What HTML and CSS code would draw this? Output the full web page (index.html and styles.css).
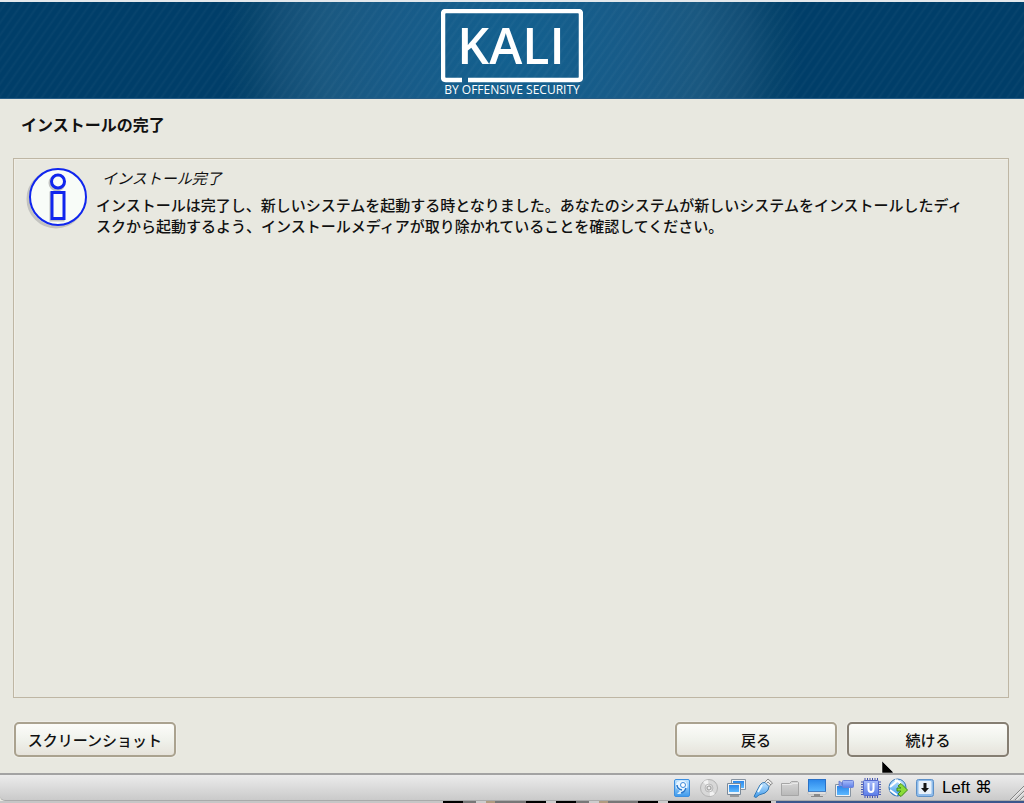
FILE: index.html
```html
<!doctype html>
<html lang="ja">
<head>
	<meta charset="utf-8">
	<meta name="viewport" content="width=device-width,initial-scale=1">
	<title>インストールの完了</title>
	<link rel="stylesheet" href="styles.css">
</head>

<body>
	<header class="banner">
		<div class="logo">
			<svg class="logo-frame" width="142" height="74" viewBox="0 0 142 74">
				<path d="M21 71H5Q2 71 2 68V5Q2 2 5 2H137Q140 2 140 5V68Q140 71 137 71H27" fill="none" stroke="#fff" stroke-width="4.500"/>
				<text class="logo-name" x="70" y="55" text-anchor="middle">KALI</text>
			</svg>
			<div class="logo-sub">BY OFFENSIVE SECURITY</div>
		</div>
	</header>

	<main class="installer">
		<h1 class="title">インストールの完了</h1>
		<section class="panel">
			<svg class="info" width="62" height="62" viewBox="0 0 62 62">
				<circle cx="30" cy="32" r="28" fill="none" stroke="#aaa" stroke-width="3" opacity=".6"/>
				<circle cx="32" cy="30" r="28" fill="#f8fcf8" stroke="#1026ee" stroke-width="2"/>
				<g fill="none" stroke="#aaa" stroke-width="3" opacity=".7">
					<circle cx="31" cy="16" r="7"/>
					<path d="M25 26h12v27H25z"/>
				</g>
				<g fill="#f8fcf8" stroke="#1026ee" stroke-width="3">
					<circle cx="32" cy="14.500" r="6.500"/>
					<path d="M26 25.500h12v26H26z"/>
				</g>
			</svg>
			<div class="message">
				<h2 class="message-title">インストール完了</h2>
				<p class="message-text">インストールは完了し、新しいシステムを起動する時となりました。あなたのシステムが新しいシステムをインストールしたディ<br>スクから起動するよう、インストールメディアが取り除かれていることを確認してください。</p>
			</div>
		</section>
		<div class="buttons">
			<button type="button" class="btn">スクリーンショット</button>
			<button type="button" class="btn back">戻る</button>
			<button type="button" class="btn next">続ける</button>
		</div>
		<svg class="cursor" width="12" height="12" viewBox="0 0 12 12"><path d="M1 0L12 11V12H1z" stroke="#fff" stroke-width=".5"/></svg>
	</main>

	<footer class="status">
		<svg width="0" height="0" class="defs">
			<defs>
				<linearGradient id="blue" x2="0" y2="1"><stop offset="0" stop-color="#2b87ea"/><stop offset="1" stop-color="#5cb8ff"/></linearGradient>
				<linearGradient id="sky" x2="0" y2="1"><stop offset="0" stop-color="#c6e6ff"/><stop offset="1" stop-color="#3c99ec"/></linearGradient>
				<linearGradient id="violet" x2="0" y2="1"><stop offset="0" stop-color="#a9bdfa"/><stop offset="1" stop-color="#5b7de8"/></linearGradient>
				<linearGradient id="grey" x2="0" y2="1"><stop offset="0" stop-color="#d8d8d8"/><stop offset="1" stop-color="#b8b8b8"/></linearGradient>
			</defs>
		</svg>
		<!-- hard disk -->
		<svg class="icon" viewBox="0 0 20 20">
			<rect x="2.500" y="1.500" width="15" height="17" rx="1.500" fill="url(#sky)" stroke="#3c8fe0"/>
			<path d="M5 4q5-3 9 0 3 4 0 8-2 3-7 4h-2l3-3-4-3q-1-3 1-6z" fill="#e6f4ff"/>
			<circle cx="11" cy="7" r="2.500" fill="#fff" stroke="#3a89dc"/>
			<path d="M5 7q0 4 5 5M14 10q-1 4-5 5" fill="none" stroke="#2878cc" stroke-width="1.500"/>
		</svg>
		<!-- optical disc -->
		<svg class="icon" viewBox="0 0 20 20">
			<circle cx="10" cy="10" r="8.500" fill="#d8d8d8" stroke="#b4b4b4"/>
			<path d="M10 10L4 4a8 8 0 0 1 5-2zM10 10l6 6a8 8 0 0 1-5 2z" fill="#f2f2f2"/>
			<circle cx="10" cy="10" r="4" fill="none" stroke="#bbb"/>
			<circle cx="10" cy="10" r="2" fill="#ececec" stroke="#999"/>
		</svg>
		<!-- network -->
		<svg class="icon" viewBox="0 0 20 20">
			<path d="M5.500 1.500h14v10h-14z" fill="#eef2f6" stroke="#8794a2"/>
			<path d="M7 3h11v7H7z" fill="url(#blue)"/>
			<path d="M4 17h9v2H4z" fill="#999"/>
			<path d="M1.500 5.500h13v11h-13z" fill="#eef2f6" stroke="#7a8a9a"/>
			<path d="M3 7h10v7H3z" fill="url(#blue)"/>
		</svg>
		<!-- usb -->
		<svg class="icon" viewBox="0 0 20 20">
			<path d="M11 5l4-4 4.500 4-4 4z" fill="#eee" stroke="#888"/>
			<path d="M14.500 4l1 1M16.500 5.500l1 1" stroke="#444"/>
			<path d="M7 7q2-3 5-2.500l4 4q0 4-4 6.500l-6 2-3 2.500-2-1 2-4z" fill="url(#sky)" stroke="#3478b4"/>
			<path d="M9 7l-4 7" stroke="#effaff" stroke-width="2"/>
		</svg>
		<!-- shared folder -->
		<svg class="icon" viewBox="0 0 20 20">
			<path d="M1.500 17.500V5.500h8l2-2h6l1 1v13z" fill="url(#grey)" stroke="#a6a6a6"/>
			<path d="M2 6.500h9l2-1h5" fill="none" stroke="#e9e9e9"/>
		</svg>
		<!-- display -->
		<svg class="icon" viewBox="0 0 20 20">
			<rect x="1.500" y="1.500" width="17" height="12" fill="url(#blue)" stroke="#2a71c6"/>
			<path d="M1 14h18v2H1z" fill="#f2f2f2" stroke="#aaa" stroke-width=".5"/>
			<path d="M7 16h6v2H7zM4 18h12v1H4z" fill="#8a8a8a"/>
		</svg>
		<!-- recording -->
		<svg class="icon" viewBox="0 0 20 20">
			<path d="M1.500 6.500h15v12h-15z" fill="#eef2f6" stroke="#8794a2"/>
			<path d="M3 8h12v9H3z" fill="url(#blue)"/>
			<rect x="8.500" y="2.500" width="11" height="7" rx="1" fill="url(#violet)" stroke="#6c82d4"/>
			<path d="M8 5L5 3v6l3-2z" fill="#8ba1ee" stroke="#596fc4" stroke-width=".7"/>
		</svg>
		<!-- cpu -->
		<svg class="icon" viewBox="0 0 20 20">
			<path d="M4 0v20M6.500 0v20M9 0v20M11.500 0v20M14 0v20M16.500 0v20M0 4h20M0 6.500h20M0 9h20M0 11.500h20M0 14h20M0 16.500h20" stroke="#4555ae"/>
			<rect x="2.500" y="2.500" width="15" height="15" rx="1" fill="url(#violet)" stroke="#5268ce"/>
			<path d="M7.500 5v6q0 3 2.500 3t2.500-3V5" fill="none" stroke="#fff" stroke-width="2"/>
		</svg>
		<!-- mouse integration -->
		<svg class="icon" viewBox="0 0 20 20">
			<circle cx="9.500" cy="9.500" r="8.500" fill="url(#sky)" stroke="#3475b8"/>
			<path d="M7 2q6 2 8 7M2 9q5-4 8-7M2 12q4 3 7 5" fill="none" stroke="#fff" stroke-width="2"/>
			<path d="M10 8l3-2.500 6.500 6.500-6.500 6.500-3-2.500 3-3H9v-3h4z" fill="#8bdc38" stroke="#3f8a18"/>
		</svg>
		<!-- keyboard capture -->
		<svg class="icon" viewBox="0 0 20 20">
			<rect x="1.500" y="1.500" width="17" height="17" rx="2" fill="#8ebbea" stroke="#5c90c8"/>
			<rect x="3.500" y="3" width="13" height="13" rx="1" fill="#e8f1fa"/>
			<path d="M8.500 5h3v5H14l-4 4.500L6 10h2.500z" fill="#151515"/>
		</svg>
		<span class="host-key">Left ⌘</span>
		<svg class="grip" width="14" height="16" viewBox="0 0 14 16">
			<path d="M0 16L14 2M5 16l9-9M10 16l4-4" stroke="#858585"/>
			<path d="M1.500 16L14 3.500M6.500 16L14 8.500M11.500 16l2.500-2.500" stroke="#f5f5f5"/>
		</svg>
	</footer>
	<div class="behind"></div>
</body>
</html>
```
FILE: styles.css
```css
* {box-sizing:border-box; margin:0; padding:0;}
body {display:flex; flex-direction:column; min-height:100vh; background:#e8e8e0; color:#111; font-family:"Noto Sans CJK JP", sans-serif; font-size:15px; font-weight:500;}

.banner {display:flex; justify-content:center; height:99px; padding-top:7px; border-top:2px solid #e4e8ec; border-bottom:1px solid #275c85;
	background:
		repeating-linear-gradient(125deg, rgba(255,255,255,0) 0, rgba(255,255,255,0) 3px, rgba(255,255,255,.03) 5px, rgba(255,255,255,0) 7px),
		radial-gradient(circle at 50% 50%, #12608f 0, #185b88 120px, #1a5880 190px, #124e76 235px, #06446c 265px, #003e69 290px);}
.logo {color:#fff; font-family:"Open Sans", sans-serif; text-align:center;}
.logo-frame {display:block;}
.logo-name {fill:#fff; font-size:50px; font-weight:600;}
.logo-sub {font-size:12px; font-weight:400; line-height:13px; white-space:nowrap;}

.installer {position:relative; flex:1; display:flex; flex-direction:column; padding:13px 15px 16px 13px;}
.title {padding-left:8px; font-size:16px; line-height:24px; font-weight:700;}
.panel {flex:1; display:flex; align-items:flex-start; margin-top:22px; padding:8px 12px; border:1px solid #beb6a4; box-shadow:inset 1px 1px #f0eee6;}
.info {flex:none;}
.message {padding-left:8px;}
.message-title {padding-left:6px; font-size:15px; font-weight:400; font-style:italic; line-height:22px;}
.message-text {margin-top:5px; line-height:21px;}

.buttons {display:flex; gap:10px; margin-top:24px; padding-left:1px;}
.btn {width:162px; height:35px; border:2px solid #aaa28f; border-radius:5px; background:linear-gradient(#fcfcf9, #f0f2ec 50%, #e6e3db); box-shadow:0 0 0 1px #efeee8; color:#111; font:inherit;}
.back {margin-left:auto;}
.next {border-color:#857e72;}
.cursor {position:absolute; left:86%; bottom:0;}

.status {display:flex; align-items:center; justify-content:flex-end; gap:7px; height:28px; border-top:2px solid #a3a3a3; border-bottom:1px solid #aaa; border-bottom-left-radius:5px; background:linear-gradient(#ececec, #cacaca);}
.defs {position:absolute;}
.icon {width:20px; height:20px;}
.host-key {color:#000; font-family:"Liberation Sans", "DejaVu Sans", sans-serif; font-size:17px; font-weight:400; line-height:20px;}
.grip {align-self:flex-end; margin-left:11px;}

/* strip of the desktop under the window */
.behind {height:2px; background:linear-gradient(90deg, #c6c6c6 0 443px, #000 443px 463px, #777 463px 476px, #ccc 476px 486px, #b09b80 486px 495px, #777 495px 526px, #000 526px 546px, #ccc 546px 556px, #000 556px 576px, #777 576px 589px, #ccc 589px 599px, #b09b80 599px 608px, #777 608px 638px, #000 638px 658px, #ccc 658px 668px, #000 668px 771px, #ccc 771px 776px, #3b568c 776px);}
```
